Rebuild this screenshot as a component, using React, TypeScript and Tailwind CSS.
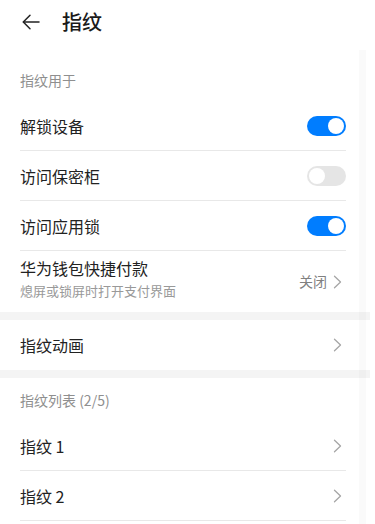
const font = { fontFamily: "'Noto Sans CJK SC', 'Noto Sans', sans-serif" };

function Toggle({ on }: { on: boolean }) {
  return (
    <div
      className={`w-[39px] h-[20px] rounded-full p-[2px] flex ${
        on ? "bg-[#007dff] justify-end" : "bg-[#e5e5e5] justify-start"
      }`}
    >
      <div className="w-[16px] h-[16px] rounded-full bg-white" />
    </div>
  );
}

function Row({
  label,
  right,
  divider = true,
}: {
  label: string;
  right: React.ReactNode;
  divider?: boolean;
}) {
  return (
    <div className="pl-5 pr-[24px]">
      <div
        className={`h-[50px] flex items-center justify-between ${
          divider ? "border-b border-[#e8e8e8]" : ""
        }`}
      >
        <span className="text-[16px] leading-[22px] text-[#222]">{label}</span>
        {right}
      </div>
    </div>
  );
}

const Chevron = () => (
  <svg width="9" height="14" viewBox="0 0 9 14" fill="none" stroke="#a6a6a6" strokeWidth="1.3" strokeLinecap="round" strokeLinejoin="round" className="mr-[4px]">
    <path d="M1.5 1.2L7.5 7L1.5 12.8" />
  </svg>
);

export default function App() {
  return (
    <div className="relative w-[375px] h-[524px] bg-white overflow-hidden" style={font}>
      {/* Header */}
      <div className="h-[44px] flex items-center pl-[21px]">
        <svg width="20" height="20" viewBox="0 0 20 20" fill="none" stroke="#222" strokeWidth="1.5" strokeLinecap="round" strokeLinejoin="round">
          <path d="M18 10H2.5" />
          <path d="M9 3.2L2.3 10L9 16.8" />
        </svg>
        <span className="ml-[21px] text-[20px] font-medium text-[#1a1a1a] leading-[28px]">指纹</span>
      </div>

      <div className="w-[370px]">
        <div className="h-[57px] flex items-end pb-[11px] px-5">
          <span className="text-[14px] leading-[20px] text-[#8f8f8f]">指纹用于</span>
        </div>
        <Row label="解锁设备" right={<Toggle on />} />
        <Row label="访问保密柜" right={<Toggle on={false} />} />
        <Row label="访问应用锁" right={<Toggle on />} />
        <div className="h-[61px] pl-5 pr-[24px] flex items-center justify-between">
          <div className="flex flex-col">
            <span className="text-[16px] leading-[22px] text-[#222] mt-[-6px]">华为钱包快捷付款</span>
            <span className="text-[13px] leading-[18px] text-[#999] mt-[3px]">熄屏或锁屏时打开支付界面</span>
          </div>
          <div className="flex items-center gap-[6px]">
            <span className="text-[14px] text-[#808080]">关闭</span>
            <Chevron />
          </div>
        </div>
        <div className="h-[8px] bg-[#f4f4f4]" />
        <Row label="指纹动画" right={<Chevron />} divider={false} />
        <div className="h-[8px] bg-[#f4f4f4]" />
        <div className="h-[43px] flex items-end pb-[11px] px-5">
          <span className="text-[14px] leading-[20px] text-[#8f8f8f]">指纹列表 (2/5)</span>
        </div>
        <Row label="指纹 1" right={<Chevron />} />
        <Row label="指纹 2" right={<Chevron />} />
      </div>

      {/* faint scroll shadow */}
      <div className="pointer-events-none absolute left-[359px] top-[50px] bottom-0 w-[7px] bg-black/[0.02]" />
    </div>
  );
}
